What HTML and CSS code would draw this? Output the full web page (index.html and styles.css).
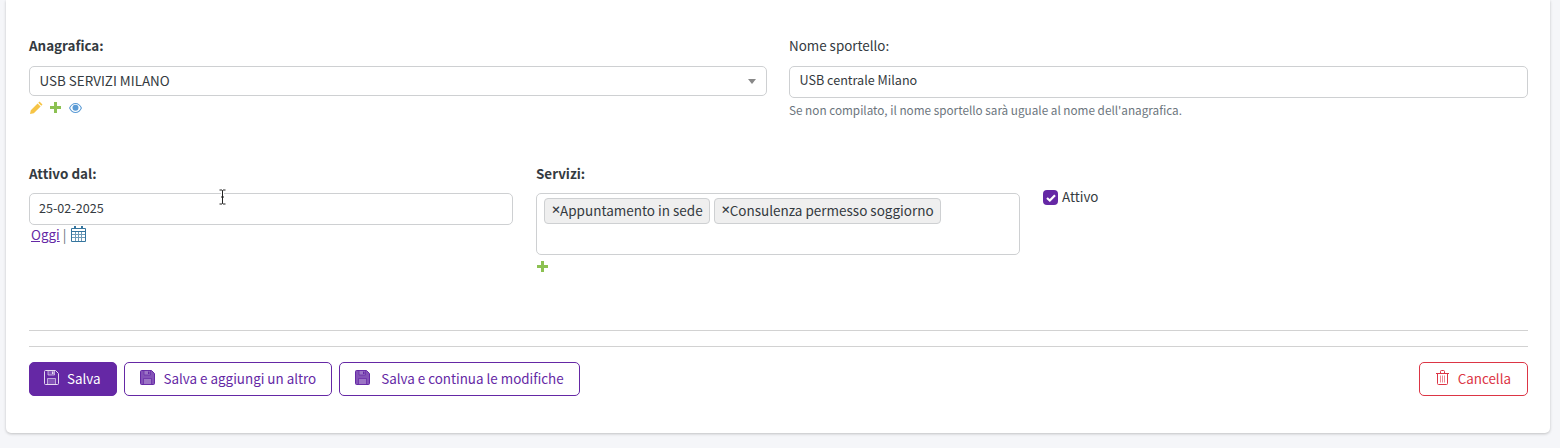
FILE: index.html
```html
<!DOCTYPE html>
<html lang="it">
<head>
<meta charset="utf-8">
<title>Sportello</title>
<link rel="stylesheet" href="styles.css">
</head>
<body>
<main class="card">
  <form class="form">
    <div class="row-top">
      <div class="field">
        <label class="label strong">Anagrafica:</label>
        <div class="select"><span>USB SERVIZI MILANO</span><span class="caret"></span></div>
        <div class="icons">
          <svg width="13" height="13" viewBox="0 0 13 13"><path fill="#f6c445" d="M9.500.500l3 3-1.200 1.200-3-3zM7.600 2.400l3 3-6.800 6.800L0 13l.8-3.800z"/></svg>
          <svg width="11" height="11" viewBox="0 0 11 11"><path fill="#8cc152" d="M4 0h3v4h4v3H7v4H4V7H0V4h4z"/></svg>
          <svg class="eye" width="13" height="10" viewBox="0 0 13 10"><path fill="#5b9bd5" fill-rule="evenodd" d="M6.500 0C9.300 0 11.700 2 13 5c-1.300 3-3.700 5-6.500 5S1.300 8 0 5c1.300-3 3.700-5 6.500-5zM6.500 1C4.300 1 2.300 2.600 1.200 5c1.100 2.400 3.100 4 5.300 4s4.200-1.600 5.300-4C10.700 2.600 8.700 1 6.500 1z"/><circle cx="6.500" cy="4.700" r="3" fill="#5b9bd5"/></svg>
        </div>
      </div>
      <div class="field">
        <label class="label">Nome sportello:</label>
        <div class="input tall">USB centrale Milano</div>
        <p class="hint">Se non compilato, il nome sportello sarà uguale al nome dell'anagrafica.</p>
      </div>
    </div>

    <div class="row-mid">
      <div class="field">
        <label class="label strong">Attivo dal:</label>
        <div class="input date">25-02-2025</div>
        <div class="today"><a href="#">Oggi</a> <span class="sep">|</span>
          <svg class="cal" width="15" height="16" viewBox="0 0 15 16"><path fill="#35759e" d="M3 0h2v3H3zM10 0h2v3h-2z"/><path fill="none" stroke="#35759e" d="M.5 2.500h14v13H.5zM.5 5.500h14"/><path stroke="#6f9cb9" fill="none" d="M4.500 6v9M7.500 6v9M10.500 6v9M1 8.500h13M1 11.500h13"/></svg>
        </div>
      </div>
      <div class="field">
        <label class="label strong">Servizi:</label>
        <div class="tags">
          <span class="tag"><b>×</b>Appuntamento in sede</span>
          <span class="tag"><b>×</b>Consulenza permesso soggiorno</span>
        </div>
        <div class="icons plus-only">
          <svg width="11" height="11" viewBox="0 0 11 11"><path fill="#8cc152" d="M4 0h3v4h4v3H7v4H4V7H0V4h4z"/></svg>
        </div>
      </div>
      <div class="check-field">
        <span class="check"><svg width="10" height="8" viewBox="0 0 10 8"><path fill="none" stroke="#fff" stroke-width="2.200" d="M1 4l2.800 2.500L9 1.200"/></svg></span>
        <span>Attivo</span>
      </div>
    </div>

    <hr class="rule">
    <hr class="rule second">

    <div class="actions">
      <button type="button" class="btn primary">
        <svg class="disk" width="15" height="15" viewBox="0 0 15 15"><path class="disk-body" d="M1.500.500h10l3 3v10a1 1 0 0 1-1 1h-12a1 1 0 0 1-1-1v-12a1 1 0 0 1 1-1z"/><path class="disk-part" d="M4 .500h6.500v4.500H4zM3.500 8.500h8v6h-8z"/><path class="disk-slot" d="M8 1.500h1.500v2.500H8z"/></svg>
        <span>Salva</span>
      </button>
      <button type="button" class="btn outline">
        <svg class="disk" width="15" height="15" viewBox="0 0 15 15"><path class="disk-body" d="M1.500.500h10l3 3v10a1 1 0 0 1-1 1h-12a1 1 0 0 1-1-1v-12a1 1 0 0 1 1-1z"/><path class="disk-part" d="M4 .500h6.500v4.500H4zM3.500 8.500h8v6h-8z"/><path class="disk-slot" d="M8 1.500h1.500v2.500H8z"/></svg>
        <span>Salva e aggiungi un altro</span>
      </button>
      <button type="button" class="btn outline wide">
        <svg class="disk" width="15" height="15" viewBox="0 0 15 15"><path class="disk-body" d="M1.500.500h10l3 3v10a1 1 0 0 1-1 1h-12a1 1 0 0 1-1-1v-12a1 1 0 0 1 1-1z"/><path class="disk-part" d="M4 .500h6.500v4.500H4zM3.500 8.500h8v6h-8z"/><path class="disk-slot" d="M8 1.500h1.500v2.500H8z"/></svg>
        <span>Salva e continua le modifiche</span>
      </button>
      <button type="button" class="btn danger">
        <svg class="disk" width="13" height="15" viewBox="0 0 13 15"><path fill="none" stroke="currentColor" d="M0 3.500h13M4.500 3V1.500a1 1 0 0 1 1-1h2a1 1 0 0 1 1 1V3M1.500 3.500v10a1 1 0 0 0 1 1h8a1 1 0 0 0 1-1v-10"/><path fill="none" stroke="#ee8a95" d="M4.500 5.500v7M6.500 5.500v7M8.500 5.500v7"/></svg>
        <span>Cancella</span>
      </button>
    </div>
  </form>
  <svg class="ibeam" width="7" height="16" viewBox="0 0 7 16"><path fill="none" stroke="#fff" stroke-width="3" d="M0 1h7M3.500 1v14M0 15h7"/><path fill="none" stroke="#222" d="M.5 1H3l.5.500L4 1h2.500M3.500 1.500v13M.5 15H3l.5-.500.5.500h2.500M2 8h3"/></svg>
</main>
</body>
</html>
```

FILE: styles.css
```css
* { box-sizing: border-box; }
html, body { margin: 0; height: 448px; overflow: hidden; }
body {
  background: #f5f6f9;
  color: #343a40;
  font-family: "Noto Sans CJK SC", "Noto Sans", sans-serif;
  font-size: 13.400px;
  line-height: 20px;
}
.card {
  position: relative;
  height: 433px;
  width: 1544px;
  margin-left: 6px;
  background: #fff;
  border-radius: 0 0 5px 5px;
  box-shadow: 0 1px 3px rgba(0, 0, 0, .22);
  padding: 35px 22px 0 23px;
}
.form { display: flex; flex-direction: column; }
.row-top { display: grid; grid-template-columns: 738px 739px; column-gap: 22px; height: 122px; }
.row-mid { display: grid; grid-template-columns: 484px 484px 1fr; column-gap: 23px; height: 173px; padding-top: 6px; }
.field { display: flex; flex-direction: column; align-items: stretch; min-width: 0; }
.label { height: 20px; margin-bottom: 11px; display: block; }
.row-mid .label { margin-bottom: 10px; }
.strong { font-weight: 700; }
.select {
  height: 30px;
  border: 1px solid #ced0d2;
  border-radius: 5px;
  padding: 0 10px 2px 9.500px;
  display: flex;
  align-items: center;
  justify-content: space-between;
}
.caret { width: 0; height: 0; border: 4px solid transparent; border-top: 5px solid #888; border-bottom: 0; margin-top: 3px; }
.input {
  height: 32px;
  border: 1px solid #ced0d2;
  border-radius: 5px;
  padding: 0 10px 5px 9.500px;
  display: flex;
  align-items: center;
  font-size: 12.600px;
}
.date { padding-left: 9px; padding-bottom: 3px; }
.icons { display: flex; align-items: center; gap: 7px; height: 13px; margin-top: 5px; padding-left: 1px; }
.eye { margin-left: 1px; }
.plus-only { margin-top: 5px; }
.hint { margin: 2px 0 0; font-size: 11.740px; color: #6c757d; line-height: 20px; }
.today { display: flex; align-items: center; gap: 3px; height: 20px; margin-top: -1px; padding-left: 2px; }
.today a { color: #6528a5; text-decoration: underline; }
.sep { color: #6c757d; }
.cal { margin-left: 2px; }
.tags {
  height: 62px;
  border: 1px solid #ced0d2;
  border-radius: 5px;
  padding: 4px 7px;
  display: flex;
  align-items: flex-start;
  gap: 4px;
}
.tag {
  height: 26px;
  padding: 0 6px 2px 6px;
  background: #efefef;
  border: 1px solid #ced0d2;
  border-radius: 4px;
  display: flex;
  align-items: center;
  white-space: nowrap;
  font-size: 13.500px;
}
.tag b { font-size: 10px; width: 9px; font-weight: 900; overflow: hidden; }
.check-field { display: flex; align-items: flex-start; gap: 4px; padding-top: 23px; height: 50px; }
.check {
  width: 15px;
  height: 15px;
  margin-top: 4px;
  border-radius: 4px;
  background: #6528a5;
  display: flex;
  align-items: center;
  justify-content: center;
}
.rule { margin: 0; border: 0; border-top: 1px solid #d2d2d2; width: 1499px; }
.second { margin-top: 15px; }
.actions { display: flex; gap: 7px; margin-top: 15px; }
.btn {
  height: 34px;
  border-radius: 5px;
  border: 1px solid #6528a5;
  background: #fff;
  color: #6528a5;
  font: inherit;
  display: flex;
  align-items: center;
  gap: 9px;
  padding: 0 15px;
  white-space: nowrap;
}
.btn span { margin-top: -3px; }
.btn .disk { margin-top: -4px; }
.disk-body { stroke: currentColor; fill: currentColor; fill-opacity: .8; }
.disk-part { fill: #fff; fill-opacity: .2; stroke: currentColor; stroke-opacity: .7; }
.disk-slot { fill: currentColor; }
.primary { background: #6528a5; color: #e4d9f0; gap: 8px; padding: 0 15px 0 14px; }
.primary .disk-body { fill-opacity: 0; }
.primary span { color: #fff; }
.wide { gap: 11px; }
.danger { margin-left: auto; border-color: #dc3545; color: #dc3545; gap: 9px; padding: 0 16px; }
.ibeam { position: absolute; left: 213px; top: 189px; }
```
